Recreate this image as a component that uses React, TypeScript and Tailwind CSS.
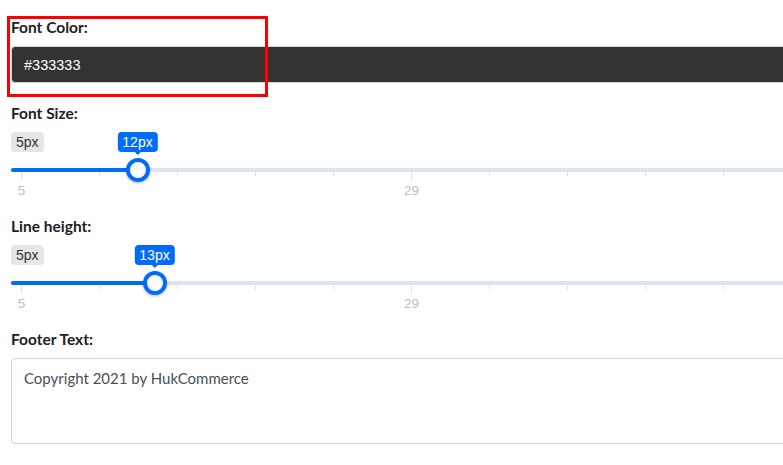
import React from "react";

const ticks = Array.from({ length: 14 }, (_, i) => i);
const gridLabels = ["5", "29"];

function RangeSlider({ value, pos }: { value: string; pos: number }) {
    return (
        <div className="relative h-[70px] w-full">
            {/* min badge */}
            <div className="flex">
                <span className="mt-[2px] rounded-[4px] bg-[#e6e6e6] px-[5px] py-[3px] text-[14px] leading-[14px] text-[#333] font-['Liberation_Sans',Arial,sans-serif]">
                    5px
                </span>
            </div>

            {/* track */}
            <div className="absolute left-0 right-0 top-[38px] h-[4px] rounded-full bg-[#dee4ec]" />
            <div className="absolute left-0 top-[38px] h-[4px] rounded-l-full bg-[#006cfa]" style={{ width: pos }} />

            {/* grid */}
            {ticks.map((i) => (
                <div
                    key={i}
                    className={`absolute top-[42px] w-px bg-[#dedede] ${i % 5 === 0 ? "h-[8px]" : "h-[4px]"}`}
                    style={{ left: 10 + i * 78 }}
                />
            ))}
            {gridLabels.map((t, i) => (
                <span
                    key={t}
                    className="absolute top-[54px] -translate-x-1/2 text-[13.5px] leading-[14px] text-[#c0c0c0] font-['Liberation_Sans',Arial,sans-serif]"
                    style={{ left: 10.5 + i * 390 }}
                >
                    {t}
                </span>
            ))}

            {/* handle */}
            <div
                className="absolute top-[28px] h-[24px] w-[24px] -translate-x-1/2 rounded-full border-[4px] border-[#006cfa] bg-white shadow-[0_1px_3px_rgba(0,0,255,0.3)]"
                style={{ left: pos }}
            />

            {/* tooltip */}
            <div className="absolute top-[2px] -translate-x-1/2" style={{ left: pos }}>
                <div className="relative rounded-[4px] bg-[#006cfa] px-[5px] py-[3px] text-[14px] leading-[14px] text-white font-['Liberation_Sans',Arial,sans-serif]">
                    {value}
                    <span className="absolute left-1/2 top-full -ml-[3px] h-0 w-0 border-x-[3px] border-t-[3px] border-x-transparent border-t-[#006cfa]" />
                </div>
            </div>
        </div>
    );
}

export default function App() {
    return (
        <div className="relative h-[465px] w-full overflow-hidden bg-white">
            <div className="flex w-[1100px] flex-col pl-[11px] pt-[17px] font-['Lato','Noto_Sans',sans-serif] text-[#222]">
                {/* Font color */}
                <div className="flex flex-col gap-[9px]">
                    <label className="text-[15.5px] font-bold leading-[20px]">Font Color:</label>
                    <div className="flex h-[37px] items-center rounded-[4px] border border-[#ced4da] bg-[#333333] px-[12px] pt-[3px] text-[14.5px] text-white font-['Liberation_Sans',Arial,sans-serif]">
                        #333333
                    </div>
                </div>

                {/* Font size */}
                <div className="mt-[20px] flex flex-col gap-[7px]">
                    <label className="text-[15.5px] font-bold leading-[20px]">Font Size:</label>
                    <RangeSlider value="12px" pos={126.5} />
                </div>

                {/* Line height */}
                <div className="mt-[16px] flex flex-col gap-[7px]">
                    <label className="text-[15.5px] font-bold leading-[20px]">Line height:</label>
                    <RangeSlider value="13px" pos={143.5} />
                </div>

                {/* Footer text */}
                <div className="mt-[16px] flex flex-col gap-[9px]">
                    <label className="text-[15.5px] font-bold leading-[20px]">Footer Text:</label>
                    <textarea
                        className="block h-[86px] w-full resize-none rounded-[4px] border border-[#ced4da] px-[12px] pt-[8px] text-[15px] leading-[22px] text-[#495057] outline-none"
                        defaultValue="Copyright 2021 by HukCommerce"
                    />
                </div>
            </div>

            {/* highlight box */}
            <div className="absolute left-[7px] top-[16px] h-[81px] w-[261px] border-[3px] border-[#ff0000]" />
        </div>
    );
}
